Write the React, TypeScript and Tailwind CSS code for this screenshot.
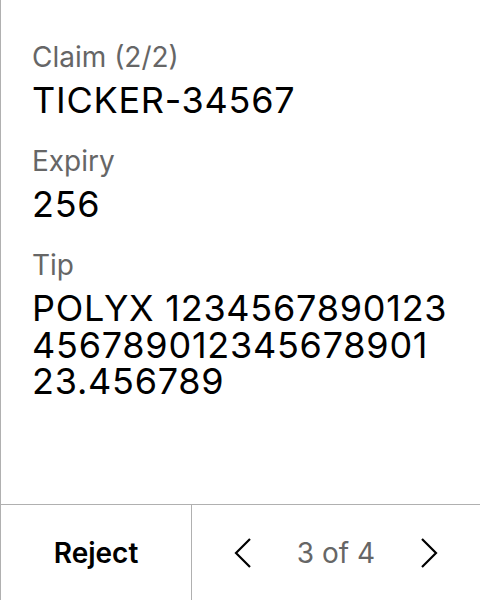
import React from "react";

export default function App() {
  return (
    <div
      className="flex h-[600px] w-[480px] flex-col border-l border-[#b0b0b0] bg-white text-black"
      style={{ fontFamily: "Inter, 'Liberation Sans', sans-serif" }}
    >
      <div className="flex flex-1 flex-col pl-[31px] pr-[32px] pt-[40px]">
        <div className="text-[28px] leading-[34px] text-[#666666]">Claim (2/2)</div>
        <div className="mt-[8px] text-[36px] leading-[36px] tracking-[0.75px]">TICKER-34567</div>
        <div className="mt-[26px] text-[28px] leading-[34px] text-[#666666]">Expiry</div>
        <div className="mt-[8px] text-[36px] leading-[36px] tracking-[0.75px]">256</div>
        <div className="mt-[26px] text-[28px] leading-[34px] text-[#666666]">Tip</div>
        <div className="mt-[8px] break-all text-[36px] leading-[36.5px] tracking-[0.75px]">
          POLYX 123456789012345678901234567890123.456789
        </div>
      </div>
      <div className="grid h-[96px] grid-cols-[191px_1fr] border-t border-[#b0b0b0]">
        <div className="flex items-center justify-center border-r border-[#b0b0b0] text-[28px] font-semibold">
          Reject
        </div>
        <div className="flex items-center justify-between pl-[42px] pr-[42px]">
          <svg width="18" height="32" viewBox="0 0 18 32" fill="none">
            <polyline points="16,2 2,16 16,30" stroke="black" strokeWidth="2.2" />
          </svg>
          <span className="text-[28px] text-[#666666]">3 of 4</span>
          <svg width="18" height="32" viewBox="0 0 18 32" fill="none">
            <polyline points="2,2 16,16 2,30" stroke="black" strokeWidth="2.2" />
          </svg>
        </div>
      </div>
    </div>
  );
}
